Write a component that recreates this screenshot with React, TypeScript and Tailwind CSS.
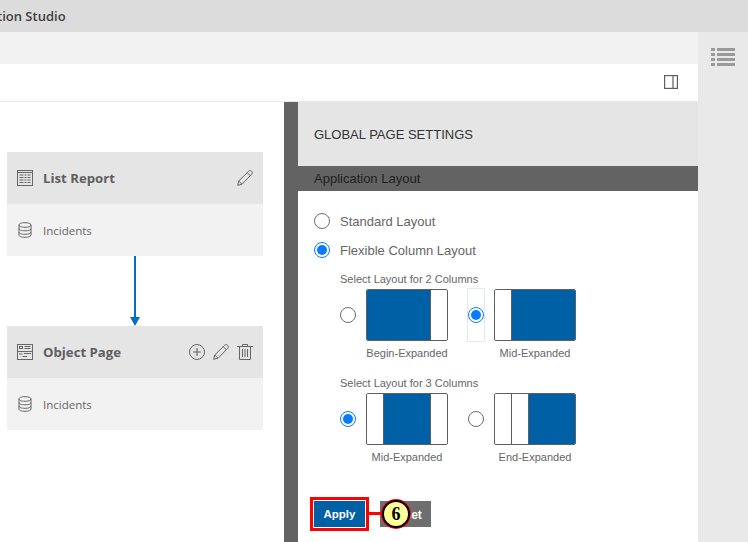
import React from "react";

const sans = "font-['Liberation_Sans',Arial,sans-serif]";
const segoe = "font-['Open_Sans','Noto_Sans',sans-serif]";

function Radio({ checked, className = "" }: { checked?: boolean; className?: string }) {
  return (
    <span
      className={`flex h-4 w-4 shrink-0 items-center justify-center rounded-full border bg-white ${
        checked ? "border-[#0a7aff]" : "border-[#6e6e6e]"
      } ${className}`}
    >
      {checked && <span className="h-[10px] w-[10px] rounded-full bg-[#0a7aff]" />}
    </span>
  );
}

function Layout({ cols }: { cols: string[] }) {
  return (
    <div className="flex h-[52px] w-[82px] overflow-hidden rounded-[2px] border border-[#5f5f5f] bg-white">
      {cols.map((c, i) => (
        <div
          key={i}
          className={`${c} ${i > 0 ? "border-l border-[#5f5f5f]" : ""}`}
        />
      ))}
    </div>
  );
}

function Option({
  checked,
  focused,
  cols,
  label,
}: {
  checked?: boolean;
  focused?: boolean;
  cols: string[];
  label: string;
}) {
  return (
    <div className="w-[128px]">
      <div className="flex items-center">
        <div
          className={`flex h-[52px] w-4 items-center justify-center ${focused ? "outline outline-1 outline-[#dcebfa]" : ""}`}
        >
          <Radio checked={checked} />
        </div>
        <div className="ml-[10px]">
          <Layout cols={cols} />
        </div>
      </div>
      <div className="ml-[26px] mt-[6px] w-[82px] whitespace-nowrap text-center text-[11px] leading-[13px] text-[#666]">
        {label}
      </div>
    </div>
  );
}

function Db() {
  return (
    <svg width="16" height="16" viewBox="0 0 16 16" fill="none" stroke="#666" strokeWidth="1" className="shrink-0">
      <path d="M2 3C2 1.500 4.500 .7 8 .7S14 1.500 14 3V13C14 14.500 11.500 15.300 8 15.300S2 14.500 2 13Z" />
      <path d="M2 3C2 4.500 4.500 5.300 8 5.300S14 4.500 14 3" />
      <path d="M2 6.500C2 8 4.500 8.800 8 8.800S14 8 14 6.500" />
      <path d="M2 10C2 11.500 4.500 12.300 8 12.300S14 11.500 14 10" />
    </svg>
  );
}

function Pencil() {
  return (
    <svg width="16" height="16" viewBox="0 0 16 16" fill="none" stroke="#666" strokeWidth="1" className="shrink-0">
      <path d="M.7 15.300L1.700 11L11.500 1.300C12.500 .4 13.700 .4 14.600 1.300S15.600 3.400 14.700 4.400L5 14.200Z" />
      <path d="M1.700 11L5 14.200M10.200 2.600L13.400 5.800" />
    </svg>
  );
}

function TableIcon() {
  return (
    <svg width="16" height="16" viewBox="0 0 16 16" fill="none" stroke="#666" strokeWidth="1" className="shrink-0">
      <rect x=".5" y=".5" width="15" height="15" />
      <path d="M1 2.500H15" />
      <path d="M2.500 5H6.500M7.500 5H9.500M10.500 5H13.500M2.500 7.500H6.500M7.500 7.500H9.500M10.500 7.500H13.500M2.500 10H6.500M7.500 10H9.500M10.500 10H13.500M2.500 12.500H6.500M7.500 12.500H9.500M10.500 12.500H13.500" />
    </svg>
  );
}

function ObjectIcon() {
  return (
    <svg width="16" height="16" viewBox="0 0 16 16" fill="none" stroke="#666" strokeWidth="1" className="shrink-0">
      <rect x=".5" y=".5" width="15" height="15" />
      <rect x="2.500" y="2.500" width="3" height="2" />
      <path d="M7.500 2.500H13.500M7.500 4.500H13.500M.5 7.500H15.500M2 10H5.500M7 9.500H14M5.500 12.500H10" />
    </svg>
  );
}

function PlusCircle() {
  return (
    <svg width="16" height="16" viewBox="0 0 16 16" fill="none" stroke="#666" strokeWidth="1" className="shrink-0">
      <circle cx="8" cy="8" r="7.500" />
      <path d="M8 4V12M4 8H12" strokeWidth="1.200" />
    </svg>
  );
}

function Trash() {
  return (
    <svg width="16" height="16" viewBox="0 0 16 16" fill="none" stroke="#666" strokeWidth="1" className="shrink-0">
      <path d="M0 2.500H16M5.500 2.500V.5H10.500V2.500M2.500 2.500V15.500H13.500V2.500M5.500 5V13M8 5V13M10.500 5V13" />
    </svg>
  );
}

function Card({ icon, title, actions }: { icon: React.ReactNode; title: string; actions: React.ReactNode }) {
  return (
    <div className={`ml-[7px] w-[256px] ${segoe}`}>
      <div className="flex h-[52px] items-center bg-[#e5e5e5] px-[10px]">
        {icon}
        <span className="ml-[10px] pt-[2px] text-[13.2px] font-bold text-[#5f5f5f]">{title}</span>
        <div className="ml-auto flex items-center gap-[8px]">{actions}</div>
      </div>
      <div className="flex h-[52px] items-center bg-[#f2f2f2] pl-[10px]">
        <Db />
        <span className="ml-[10px] pt-[2px] text-[11.5px] text-[#666]">Incidents</span>
      </div>
    </div>
  );
}

export default function App() {
  return (
    <div className={`relative flex h-[542px] w-[748px] flex-col overflow-hidden bg-white ${sans}`}>
      <header className="flex h-8 shrink-0 items-center overflow-hidden bg-[#dcdcdc] pt-[2px]">
        <span className={`ml-[-49px] whitespace-nowrap text-[13px] font-semibold text-[#3f3f3f] ${segoe}`}>
          Application Studio
        </span>
      </header>
      <div className="flex min-h-0 flex-1">
        <div className="flex w-[698px] flex-col">
          <div className="h-8 shrink-0 bg-[#f2f2f2]" />
          <div className="flex h-[38px] shrink-0 items-center justify-end border-b border-[#e8e8ee] pb-[1px] pr-[20px]">
            <svg width="14" height="14" viewBox="0 0 14 14" fill="none" stroke="#5f5f5f" strokeWidth="1.200">
              <rect x=".6" y=".6" width="12.800" height="12.800" />
              <path d="M9 .6V13.400" />
            </svg>
          </div>
          <div className="flex min-h-0 flex-1">
            <div className="w-[284px] shrink-0 pt-[50px]">
              <Card icon={<TableIcon />} title="List Report" actions={<Pencil />} />
              <div className="ml-[130px] flex h-[70px] w-[10px] flex-col items-center">
                <div className="w-[2px] flex-1 bg-[#0070c4]" />
                <div className="h-0 w-0 border-x-[5px] border-t-[9px] border-x-transparent border-t-[#0070c4]" />
              </div>
              <Card
                icon={<ObjectIcon />}
                title="Object Page"
                actions={
                  <>
                    <PlusCircle />
                    <Pencil />
                    <Trash />
                  </>
                }
              />
            </div>
            <div className="w-[14px] shrink-0 bg-[#636363]" />
            <div className="min-w-0 flex-1">
              <div className="flex h-[64px] items-center bg-[#e5e5e5] pl-4 pt-[2px] text-[13px] text-[#333]">
                GLOBAL PAGE SETTINGS
              </div>
              <div className="flex h-[25px] items-center bg-[#636363] pl-4 text-[13px] text-[#1f1f1f]">
                Application Layout
              </div>
              <div className="pl-4 pt-[21px]">
                <label className="flex h-[18px] items-center text-[13px] text-[#666]">
                  <Radio />
                  <span className="ml-[10px] pt-[2px]">Standard Layout</span>
                </label>
                <label className="mt-[11px] flex h-[18px] items-center text-[13px] text-[#666]">
                  <Radio checked />
                  <span className="ml-[10px] pt-[2px]">Flexible Column Layout</span>
                </label>
                <div className="ml-[26px] mt-[14px]">
                  <div className="text-[11px] leading-[13px] text-[#666]">Select Layout for 2 Columns</div>
                  <div className="mt-[3px] flex">
                    <Option cols={["w-[63px] bg-[#0060a5]", "flex-1 bg-white"]} label="Begin-Expanded" />
                    <Option
                      checked
                      focused
                      cols={["w-[16px] bg-white", "flex-1 bg-[#0060a5]"]}
                      label="Mid-Expanded"
                    />
                  </div>
                  <div className="mt-[17px] text-[11px] leading-[13px] text-[#666]">Select Layout for 3 Columns</div>
                  <div className="mt-[3px] flex">
                    <Option
                      checked
                      cols={["w-[16px] bg-white", "w-[47px] bg-[#0060a5]", "flex-1 bg-white"]}
                      label="Mid-Expanded"
                    />
                    <Option
                      cols={["w-[16px] bg-white", "w-[17px] bg-white", "flex-1 bg-[#0060a5]"]}
                      label="End-Expanded"
                    />
                  </div>
                </div>
                <div className="mt-[37px] flex items-center">
                  <button className="flex h-[26px] w-[51px] items-center justify-center bg-[#0060a5] pt-[2px] text-[11.5px] font-bold text-white">
                    Apply
                  </button>
                  <button className="ml-[15px] flex h-[26px] w-[51px] items-center justify-center bg-[#6e6e6e] pt-[2px] text-[12px] font-bold text-white">
                    Reset
                  </button>
                </div>
              </div>
            </div>
          </div>
        </div>
        <aside className="flex w-[50px] shrink-0 justify-center bg-[#e9e9e9] pt-[16px]">
          <svg width="24" height="18" viewBox="0 0 24 18" fill="#9a9a9a" className="shrink-0">
            <path d="M0 0h4v3H0zM6 0h18v3H6zM0 5h4v3H0zM6 5h18v3H6zM0 10h4v3H0zM6 10h18v3H6zM0 15h4v3H0zM6 15h18v3H6z" />
          </svg>
        </aside>
      </div>

      <div className="absolute left-[310px] top-[497px] h-[34px] w-[59px] border-[3px] border-[#f00]" />
      <div className="absolute left-[369px] top-[512px] h-[3px] w-[15px] bg-[#f00]" />
      <div className="absolute left-[382px] top-[500px] flex h-[28px] w-[28px] items-center justify-center rounded-full border-2 border-black bg-[#ffff99] font-['Liberation_Serif',serif] text-[18px] font-bold text-black shadow-[0_0_0_1px_#f00]">
        6
      </div>
    </div>
  );
}
